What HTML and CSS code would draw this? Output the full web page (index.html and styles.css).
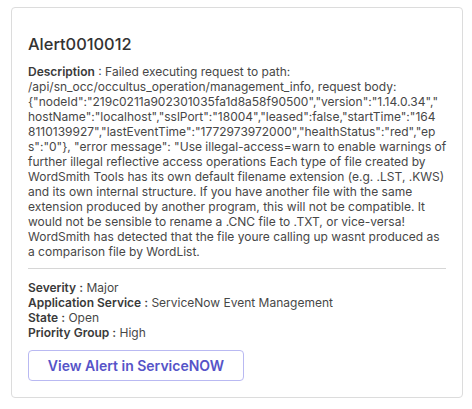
FILE: index.html
```html
<!DOCTYPE html>
<html lang="en">
<head>
  <meta charset="UTF-8">
  <title>Alert0010012</title>
  <link rel="stylesheet" href="styles.css">
</head>
<body>
  <div class="alert-card">
    <h2 class="alert-title">Alert0010012</h2>

    <!-- line breaks kept as in the original card -->
    <p class="alert-description">
      <span class="label">Description</span> : Failed executing request to path:<br>
      /api/sn_occ/occultus_operation/management_info, request body:<br>
      {"nodeId":"219c0211a902301035fa1d8a58f90500","version":"1.14.0.34","<br>
      hostName":"localhost","sslPort":"18004","leased":false,"startTime":"164<br>
      8110139927","lastEventTime":"1772973972000","healthStatus":"red","ep<br>
      s":"0"}, "error message": "Use illegal-access=warn to enable warnings of<br>
      further illegal reflective access operations Each type of file created by<br>
      WordSmith Tools has its own default filename extension (e.g. .LST, .KWS)<br>
      and its own internal structure. If you have another file with the same<br>
      extension produced by another program, this will not be compatible. It<br>
      would not be sensible to rename a .CNC file to .TXT, or vice-versa!<br>
      WordSmith has detected that the file youre calling up wasnt produced as<br>
      a comparison file by WordList.
    </p>

    <hr class="divider">

    <ul class="alert-fields">
      <li><span class="label">Severity :</span> Major</li>
      <li><span class="label">Application Service :</span> ServiceNow Event Management</li>
      <li><span class="label">State :</span> Open</li>
      <li><span class="label">Priority Group :</span> High</li>
    </ul>

    <button class="view-alert">View Alert in ServiceNOW</button>
  </div>
</body>
</html>
```

FILE: styles.css
```css
body {
  margin: 0;
  padding: 7px 9px 0 11px;
  font-family: Inter, "Noto Sans", sans-serif;
  color: #474747;
  background: #fff;
}

/* Card */
.alert-card {
  border: 1px solid #dcdcdc;
  border-radius: 4px;
  padding: 25px 16px 16px 16px;
  box-sizing: border-box;
  height: 391px;
}

.alert-title {
  margin: 0 0 9px 0;
  font-size: 16.4px;
  font-weight: 500;
  line-height: 22px;
  color: #333;
}

.alert-description {
  margin: 0;
  font-size: 12px;
  line-height: 15px;
  white-space: nowrap;
}

.label {
  font-weight: 600;
  color: #3a3a3a;
}

.divider {
  border: none;
  border-top: 1px solid #d6d6d6;
  margin: 9px 0 11px 0;
}

/* Fields */
.alert-fields {
  list-style: none;
  margin: 0;
  padding: 0;
  font-size: 12px;
  line-height: 15px;
}

/* Button */
.view-alert {
  display: block;
  margin-top: 10px;
  width: 216px;
  height: 31px;
  background: #fff;
  border: 1px solid #b9b9f2;
  border-radius: 4px;
  color: #5654c8;
  font-family: inherit;
  font-size: 14px;
  font-weight: 600;
  cursor: pointer;
}
```
